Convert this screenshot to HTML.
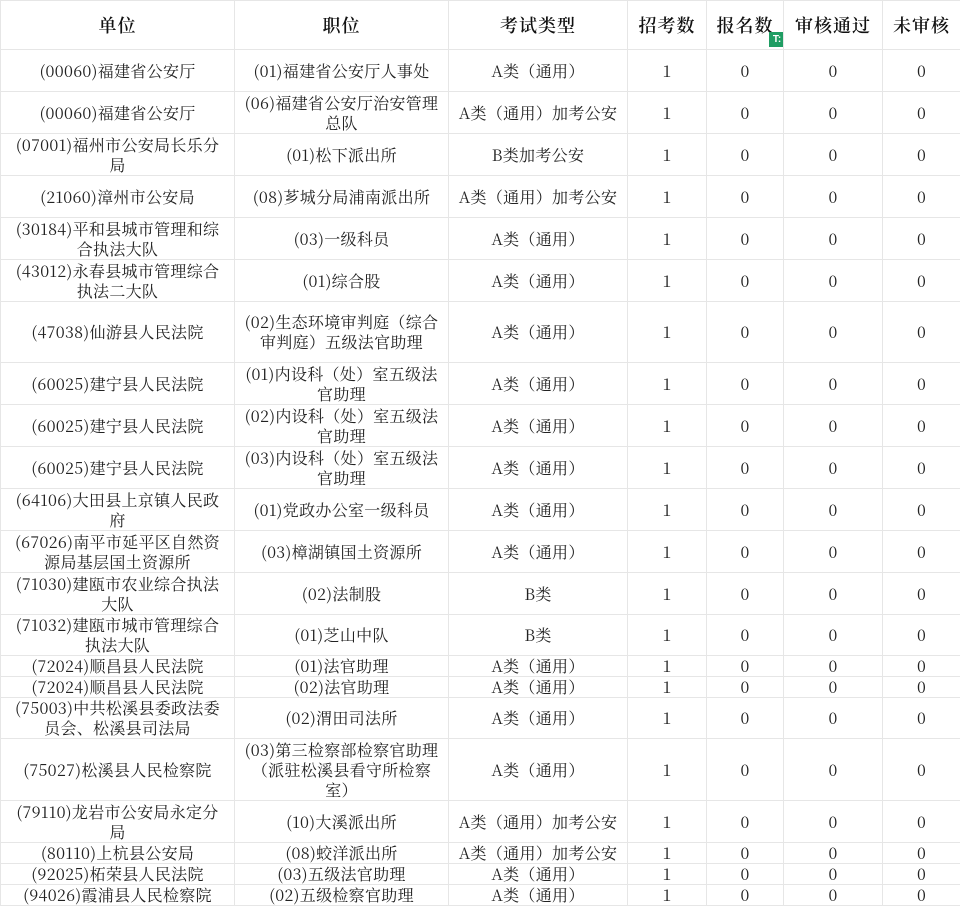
<!DOCTYPE html>
<html><head><meta charset="utf-8"><style>
body{margin:0;background:#fff;width:960px;height:905px;overflow:hidden}
table{border-collapse:collapse;table-layout:fixed;width:960px;font-family:"Noto Serif CJK SC","Liberation Serif",serif;font-size:16px;color:#222;letter-spacing:0.3px}
td,th{border:1px solid #e6e6e6;padding:0 6px;text-align:center;vertical-align:middle;line-height:20px;overflow:hidden;white-space:normal}
th{font-weight:600;font-size:18px;color:#111;position:relative;letter-spacing:1px}
.f{position:absolute;right:-2px;bottom:2px;width:16px;height:15px;background:#1f9d63;color:#fff;font:bold 10px "Liberation Sans",sans-serif;line-height:15px;letter-spacing:0}
</style></head><body>
<table>
<colgroup><col style="width:234px"><col style="width:214px"><col style="width:179px"><col style="width:79px"><col style="width:77px"><col style="width:99px"><col style="width:78px"></colgroup>
<tr style="height:49px"><th>单位</th><th>职位</th><th>考试类型</th><th>招考数</th><th>报名数<span class="f">T:</span></th><th>审核通过</th><th>未审核</th></tr>
<tr style="height:42px"><td>(00060)福建省公安厅</td><td>(01)福建省公安厅人事处</td><td>A类（通用）</td><td>1</td><td>0</td><td>0</td><td>0</td></tr>
<tr style="height:42px"><td>(00060)福建省公安厅</td><td>(06)福建省公安厅治安管理<br>总队</td><td>A类（通用）加考公安</td><td>1</td><td>0</td><td>0</td><td>0</td></tr>
<tr style="height:42px"><td>(07001)福州市公安局长乐分<br>局</td><td>(01)松下派出所</td><td>B类加考公安</td><td>1</td><td>0</td><td>0</td><td>0</td></tr>
<tr style="height:42px"><td>(21060)漳州市公安局</td><td>(08)芗城分局浦南派出所</td><td>A类（通用）加考公安</td><td>1</td><td>0</td><td>0</td><td>0</td></tr>
<tr style="height:42px"><td>(30184)平和县城市管理和综<br>合执法大队</td><td>(03)一级科员</td><td>A类（通用）</td><td>1</td><td>0</td><td>0</td><td>0</td></tr>
<tr style="height:42px"><td>(43012)永春县城市管理综合<br>执法二大队</td><td>(01)综合股</td><td>A类（通用）</td><td>1</td><td>0</td><td>0</td><td>0</td></tr>
<tr style="height:61px"><td>(47038)仙游县人民法院</td><td>(02)生态环境审判庭（综合<br>审判庭）五级法官助理</td><td>A类（通用）</td><td>1</td><td>0</td><td>0</td><td>0</td></tr>
<tr style="height:42px"><td>(60025)建宁县人民法院</td><td>(01)内设科（处）室五级法<br>官助理</td><td>A类（通用）</td><td>1</td><td>0</td><td>0</td><td>0</td></tr>
<tr style="height:42px"><td>(60025)建宁县人民法院</td><td>(02)内设科（处）室五级法<br>官助理</td><td>A类（通用）</td><td>1</td><td>0</td><td>0</td><td>0</td></tr>
<tr style="height:42px"><td>(60025)建宁县人民法院</td><td>(03)内设科（处）室五级法<br>官助理</td><td>A类（通用）</td><td>1</td><td>0</td><td>0</td><td>0</td></tr>
<tr style="height:42px"><td>(64106)大田县上京镇人民政<br>府</td><td>(01)党政办公室一级科员</td><td>A类（通用）</td><td>1</td><td>0</td><td>0</td><td>0</td></tr>
<tr style="height:42px"><td>(67026)南平市延平区自然资<br>源局基层国土资源所</td><td>(03)樟湖镇国土资源所</td><td>A类（通用）</td><td>1</td><td>0</td><td>0</td><td>0</td></tr>
<tr style="height:42px"><td>(71030)建瓯市农业综合执法<br>大队</td><td>(02)法制股</td><td>B类</td><td>1</td><td>0</td><td>0</td><td>0</td></tr>
<tr style="height:41px"><td>(71032)建瓯市城市管理综合<br>执法大队</td><td>(01)芝山中队</td><td>B类</td><td>1</td><td>0</td><td>0</td><td>0</td></tr>
<tr style="height:21px"><td>(72024)顺昌县人民法院</td><td>(01)法官助理</td><td>A类（通用）</td><td>1</td><td>0</td><td>0</td><td>0</td></tr>
<tr style="height:21px"><td>(72024)顺昌县人民法院</td><td>(02)法官助理</td><td>A类（通用）</td><td>1</td><td>0</td><td>0</td><td>0</td></tr>
<tr style="height:41px"><td>(75003)中共松溪县委政法委<br>员会、松溪县司法局</td><td>(02)渭田司法所</td><td>A类（通用）</td><td>1</td><td>0</td><td>0</td><td>0</td></tr>
<tr style="height:62px"><td>(75027)松溪县人民检察院</td><td>(03)第三检察部检察官助理<br>（派驻松溪县看守所检察<br>室）</td><td>A类（通用）</td><td>1</td><td>0</td><td>0</td><td>0</td></tr>
<tr style="height:42px"><td>(79110)龙岩市公安局永定分<br>局</td><td>(10)大溪派出所</td><td>A类（通用）加考公安</td><td>1</td><td>0</td><td>0</td><td>0</td></tr>
<tr style="height:21px"><td>(80110)上杭县公安局</td><td>(08)蛟洋派出所</td><td>A类（通用）加考公安</td><td>1</td><td>0</td><td>0</td><td>0</td></tr>
<tr style="height:21px"><td>(92025)柘荣县人民法院</td><td>(03)五级法官助理</td><td>A类（通用）</td><td>1</td><td>0</td><td>0</td><td>0</td></tr>
<tr style="height:21px"><td>(94026)霞浦县人民检察院</td><td>(02)五级检察官助理</td><td>A类（通用）</td><td>1</td><td>0</td><td>0</td><td>0</td></tr>
</table>
</body></html>
